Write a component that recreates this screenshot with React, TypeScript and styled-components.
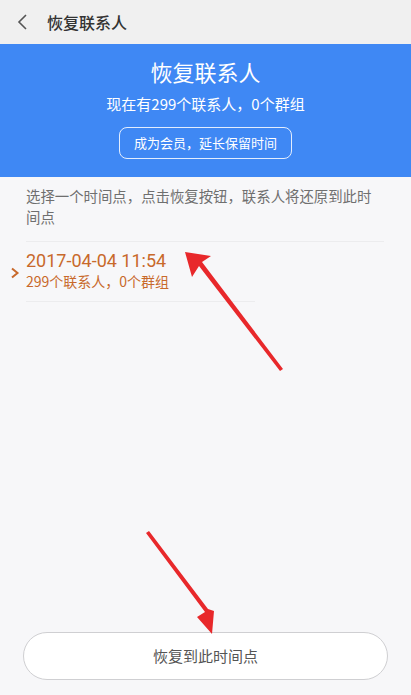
import React from "react";
import styled, { createGlobalStyle } from "styled-components";

const GlobalStyle = createGlobalStyle`
  html, body {
    margin: 0;
    padding: 0;
    background: #f7f7f9;
    font-family: "Noto Sans CJK SC", "Noto Sans", Roboto, sans-serif;
  }
`;

const Page = styled.div`
  position: relative;
  display: flex;
  flex-direction: column;
  width: 411px;
  height: 695px;
  background: #f7f7f9;
  overflow: hidden;
`;

const TopBar = styled.div`
  display: flex;
  align-items: center;
  height: 44px;
  padding-left: 16px;
  background: #f0f0f0;
  color: #333;
`;

const BackIcon = styled.svg`
  width: 14px;
  height: 18px;
  margin-right: 17px;
`;

const TopTitle = styled.div`
  font-size: 16px;
  font-weight: 500;
`;

const Banner = styled.div`
  display: flex;
  flex-direction: column;
  align-items: center;
  height: 133px;
  box-sizing: border-box;
  padding-top: 12px;
  background: #3f88f4;
  color: #fff;
`;

const BannerTitle = styled.div`
  font-size: 22px;
  line-height: 30px;
`;

const BannerSub = styled.div`
  margin-top: 7px;
  font-size: 15px;
  line-height: 22px;
`;

const OutlineButton = styled.div`
  margin-top: 12px;
  padding: 0 14px;
  height: 30px;
  line-height: 30px;
  border: 1px solid rgba(255, 255, 255, 0.85);
  border-radius: 8px;
  font-size: 13px;
`;

const HintBlock = styled.div`
  margin: 8px 27px 0 26px;
  padding-bottom: 14px;
  border-bottom: 1px solid #ececee;
`;

const HintText = styled.div`
  max-width: 346px;
  font-size: 14.4px;
  line-height: 21px;
  color: #6f6f6f;
`;

const Record = styled.div`
  display: flex;
  align-items: center;
  color: #c8692b;
`;

const Chevron = styled.svg`
  width: 10px;
  height: 12px;
  margin: 2px 6px 0 10px;
`;

const RecordBody = styled.div`
  display: flex;
  flex-direction: column;
  width: 229px;
  padding: 8px 0 10px;
  border-bottom: 1px solid #ececee;
`;

const RecordTime = styled.div`
  font-family: Roboto, "Noto Sans", sans-serif;
  font-size: 18px;
  line-height: 22px;
`;

const RecordSub = styled.div`
  font-size: 14px;
  line-height: 19px;
`;

const Spacer = styled.div`
  flex: 1;
`;

const RestoreButton = styled.div`
  margin: 0 23px 15px;
  height: 46px;
  line-height: 46px;
  border: 1px solid #cfcfd2;
  border-radius: 24px;
  background: #fff;
  text-align: center;
  font-size: 15px;
  color: #555;
`;

const Annotations = styled.svg`
  position: absolute;
  left: 0;
  top: 0;
  width: 411px;
  height: 695px;
  pointer-events: none;
`;

export default function App() {
  return (
    <Page>
      <GlobalStyle />
      <TopBar>
        <BackIcon viewBox="0 0 14 18">
          <path d="M10 2 L3 9 L10 16" fill="none" stroke="#555" strokeWidth="1.6" />
        </BackIcon>
        <TopTitle>恢复联系人</TopTitle>
      </TopBar>
      <Banner>
        <BannerTitle>恢复联系人</BannerTitle>
        <BannerSub>现在有299个联系人，0个群组</BannerSub>
        <OutlineButton>成为会员，延长保留时间</OutlineButton>
      </Banner>
      <HintBlock>
        <HintText>选择一个时间点，点击恢复按钮，联系人将还原到此时间点</HintText>
      </HintBlock>
      <Record>
        <Chevron viewBox="0 0 10 12">
          <path d="M2 1.5 L7.5 6 L2 10.5" fill="none" stroke="#c8692b" strokeWidth="2" />
        </Chevron>
        <RecordBody>
          <RecordTime>2017-04-04 11:54</RecordTime>
          <RecordSub>299个联系人，0个群组</RecordSub>
        </RecordBody>
      </Record>
      <Spacer />
      <RestoreButton>恢复到此时间点</RestoreButton>
      <Annotations viewBox="0 0 411 695">
        <polygon points="283,369 202,262 211,256 185,252 192,277 199,266 280,371" fill="#e8282b" />
        <polygon points="146,533 205,612 197,617 212,634 214,611 208,609 149,531" fill="#e8282b" />
      </Annotations>
    </Page>
  );
}
